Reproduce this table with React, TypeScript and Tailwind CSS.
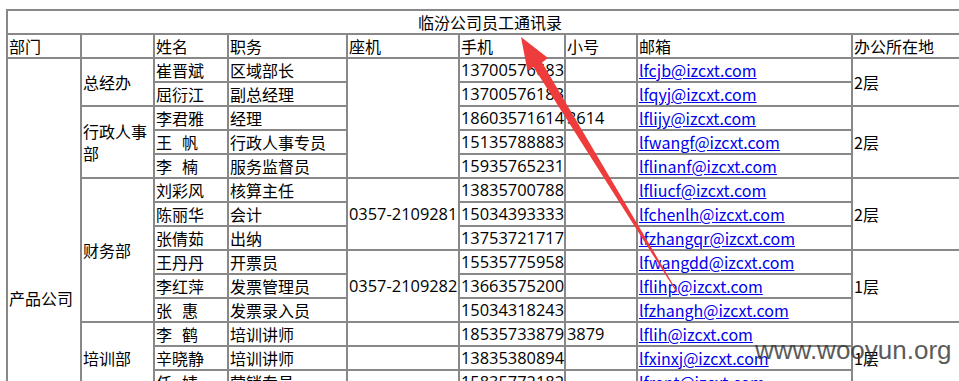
import React from "react";

const cell = "border border-[#888] px-[1px] py-0 h-[24px] align-middle text-left whitespace-nowrap";
const wrapCell = "border border-[#888] px-[1px] py-0 h-[24px] align-middle text-left";
const num = "border border-[#888] px-[1px] py-0 h-[24px] align-middle text-left whitespace-nowrap font-['Open_Sans',sans-serif] text-[16.4px]";

function Name({ n }: { n: string }) {
  if (n.length === 2) {
    return (
      <span>
        {n[0]}
        <span className="inline-block w-[10px]" />
        {n[1]}
      </span>
    );
  }
  return <span>{n}</span>;
}

function Mail({ m }: { m: string }) {
  return (
    <a href="#" className="text-[#0000ee] underline">
      {m}@izcxt.com
    </a>
  );
}

export default function App() {
  const font = {
    fontFamily: '"Noto Sans CJK SC", "Noto Sans", sans-serif',
  };
  return (
    <div className="relative w-[959px] h-[381px] overflow-hidden bg-white">
      <div className="pl-[6px] pt-[9px]">
        <table
          className="border-separate border-spacing-0 table-fixed border border-[#888] w-[968px] text-[16px] leading-[22px] text-black"
          style={font}
        >
          <colgroup>
            <col className="w-[74px]" />
            <col className="w-[73px]" />
            <col className="w-[74px]" />
            <col className="w-[119px]" />
            <col className="w-[112px]" />
            <col className="w-[106px]" />
            <col className="w-[72px]" />
            <col className="w-[215px]" />
            <col className="w-[121px]" />
          </colgroup>
          <tbody>
            <tr>
              <td colSpan={9} className="border border-[#888] h-[23px] p-0 text-center align-middle">
                临汾公司员工通讯录
              </td>
            </tr>
            <tr>
              <td className={cell}>部门</td>
              <td className={cell}></td>
              <td className={cell}>姓名</td>
              <td className={cell}>职务</td>
              <td className={cell}>座机</td>
              <td className={cell}>手机</td>
              <td className={cell}>小号</td>
              <td className={cell}>邮箱</td>
              <td className={cell}>办公所在地</td>
            </tr>
            <tr>
              <td rowSpan={20} className={cell}>产品公司</td>
              <td rowSpan={2} className={cell}>总经办</td>
              <td className={cell}><Name n="崔晋斌" /></td>
              <td className={cell}>区域部长</td>
              <td rowSpan={5} className={num}></td>
              <td className={num}>13700576683</td>
              <td className={num}></td>
              <td className={cell}><Mail m="lfcjb" /></td>
              <td rowSpan={2} className={cell}>2层</td>
            </tr>
            <tr>
              <td className={cell}><Name n="屈衍江" /></td>
              <td className={cell}>副总经理</td>
              <td className={num}>13700576183</td>
              <td className={num}></td>
              <td className={cell}><Mail m="lfqyj" /></td>
            </tr>
            <tr>
              <td rowSpan={3} className={wrapCell}>行政人事部</td>
              <td className={cell}><Name n="李君雅" /></td>
              <td className={cell}>经理</td>
              <td className={num}>18603571614</td>
              <td className={num}>3614</td>
              <td className={cell}><Mail m="lflijy" /></td>
              <td rowSpan={3} className={cell}>2层</td>
            </tr>
            <tr>
              <td className={cell}><Name n="王帆" /></td>
              <td className={cell}>行政人事专员</td>
              <td className={num}>15135788883</td>
              <td className={num}></td>
              <td className={cell}><Mail m="lfwangf" /></td>
            </tr>
            <tr>
              <td className={cell}><Name n="李楠" /></td>
              <td className={cell}>服务监督员</td>
              <td className={num}>15935765231</td>
              <td className={num}></td>
              <td className={cell}><Mail m="lflinanf" /></td>
            </tr>
            <tr>
              <td rowSpan={6} className={cell}>财务部</td>
              <td className={cell}><Name n="刘彩风" /></td>
              <td className={cell}>核算主任</td>
              <td rowSpan={3} className={num}>0357-2109281</td>
              <td className={num}>13835700788</td>
              <td className={num}></td>
              <td className={cell}><Mail m="lfliucf" /></td>
              <td rowSpan={3} className={cell}>2层</td>
            </tr>
            <tr>
              <td className={cell}><Name n="陈丽华" /></td>
              <td className={cell}>会计</td>
              <td className={num}>15034393333</td>
              <td className={num}></td>
              <td className={cell}><Mail m="lfchenlh" /></td>
            </tr>
            <tr>
              <td className={cell}><Name n="张倩茹" /></td>
              <td className={cell}>出纳</td>
              <td className={num}>13753721717</td>
              <td className={num}></td>
              <td className={cell}><Mail m="lfzhangqr" /></td>
            </tr>
            <tr>
              <td className={cell}><Name n="王丹丹" /></td>
              <td className={cell}>开票员</td>
              <td rowSpan={3} className={num}>0357-2109282</td>
              <td className={num}>15535775958</td>
              <td className={num}></td>
              <td className={cell}><Mail m="lfwangdd" /></td>
              <td rowSpan={3} className={cell}>1层</td>
            </tr>
            <tr>
              <td className={cell}><Name n="李红萍" /></td>
              <td className={cell}>发票管理员</td>
              <td className={num}>13663575200</td>
              <td className={num}></td>
              <td className={cell}><Mail m="lflihp" /></td>
            </tr>
            <tr>
              <td className={cell}><Name n="张惠" /></td>
              <td className={cell}>发票录入员</td>
              <td className={num}>15034318243</td>
              <td className={num}></td>
              <td className={cell}><Mail m="lfzhangh" /></td>
            </tr>
            <tr>
              <td rowSpan={3} className={cell}>培训部</td>
              <td className={cell}><Name n="李鹤" /></td>
              <td className={cell}>培训讲师</td>
              <td className={num}></td>
              <td className={num}>18535733879</td>
              <td className={num}>3879</td>
              <td className={cell}><Mail m="lflih" /></td>
              <td rowSpan={3} className={cell}>1层</td>
            </tr>
            <tr>
              <td className={cell}><Name n="辛晓静" /></td>
              <td className={cell}>培训讲师</td>
              <td className={num}></td>
              <td className={num}>13835380894</td>
              <td className={num}></td>
              <td className={cell}><Mail m="lfxinxj" /></td>
            </tr>
            <tr>
              <td className={cell}><Name n="任婧" /></td>
              <td className={cell}>营销专员</td>
              <td className={num}></td>
              <td className={num}>15835772182</td>
              <td className={num}></td>
              <td className={cell}><Mail m="lfrent" /></td>
            </tr>
            {[
              ["王磊", "营销专员", "13935712345", "lfwangl"],
              ["赵敏", "营销专员", "13835798765", "lfzhaom"],
              ["孙亮", "营销专员", "15035711223", "lfsunl"],
              ["周静", "客服专员", "13703571122", "lfzhouj"],
              ["吴刚", "客服专员", "15135763344", "lfwug"],
              ["郑洁", "客服专员", "18635795566", "lfzhengj"],
            ].map((r, i) => (
              <tr key={i}>
                {i === 0 && (
                  <td rowSpan={6} className={cell}>营销部</td>
                )}
                <td className={cell}><Name n={r[0]} /></td>
                <td className={cell}>{r[1]}</td>
                <td className={num}></td>
                <td className={num}>{r[2]}</td>
                <td className={num}></td>
                <td className={cell}><Mail m={r[3]} /></td>
                {i === 0 && (
                  <td rowSpan={6} className={cell}>1层</td>
                )}
              </tr>
            ))}
          </tbody>
        </table>
      </div>

      <svg
        className="absolute left-0 top-0 pointer-events-none"
        width="959"
        height="381"
        viewBox="0 0 959 381"
      >
        <polygon
          points="521,37 548,58 542,62.5 677.4,291.7 676.6,292.3 533.5,67 527.5,71"
          fill="#ee3b3b"
        />
      </svg>

      <div
        className="absolute left-[755px] top-[337px] text-[26px] leading-[26px] text-[#333] opacity-80 whitespace-nowrap pointer-events-none"
        style={{ fontFamily: '"Liberation Sans", Arial, sans-serif' }}
      >
        www.wooyun.org
      </div>
    </div>
  );
}
